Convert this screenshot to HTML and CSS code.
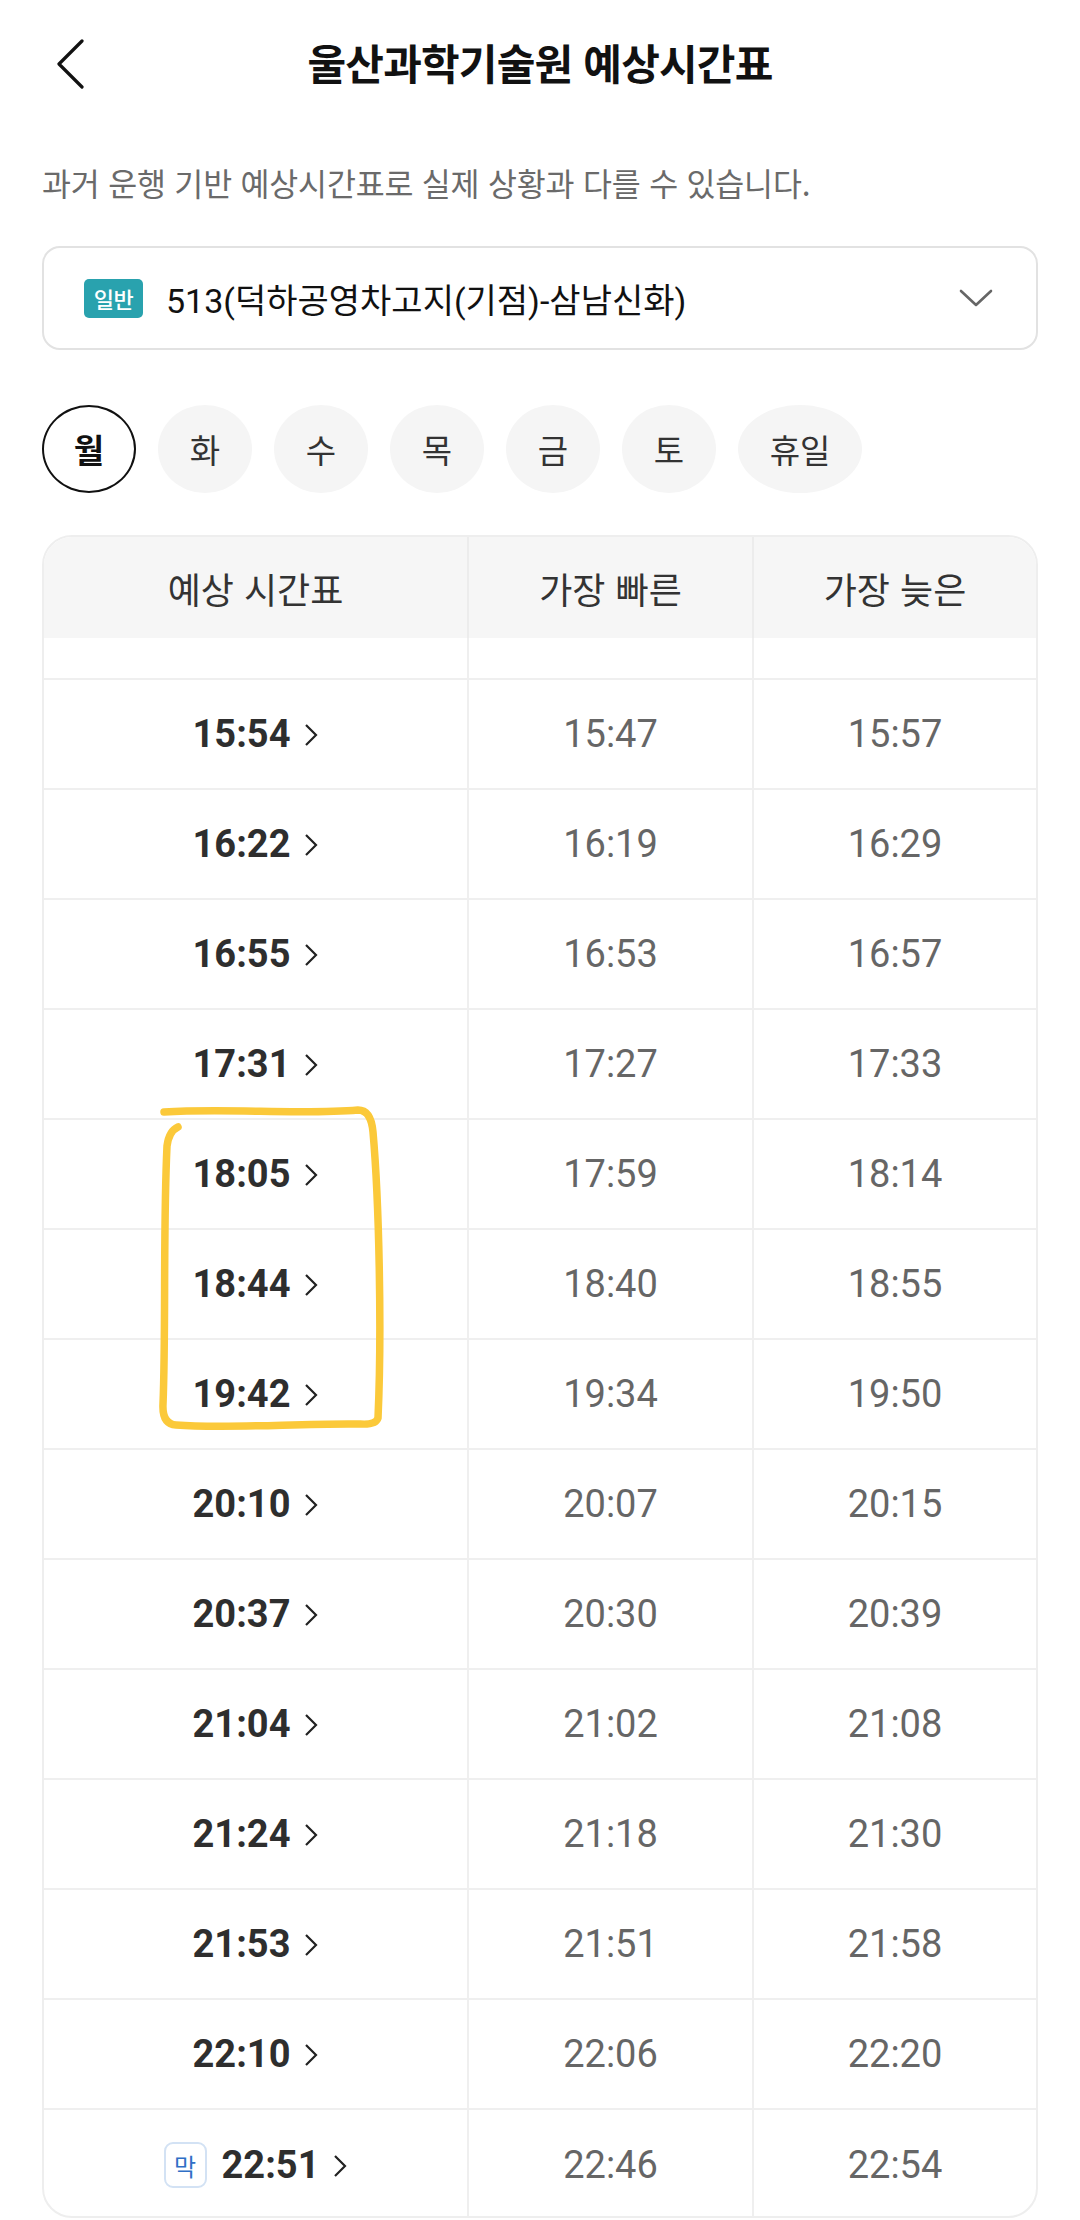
FILE: index.html
```html
<!DOCTYPE html>
<html lang="ko">
<head>
<meta charset="utf-8">
<title>울산과학기술원 예상시간표</title>
<link rel="stylesheet" href="styles.css">
</head>
<body>
<div class="page">
  <header class="topbar">
    <div class="back">
      <svg width="28" height="50" viewBox="0 0 28 50"><path d="M25 2 L2 25 L25 48" fill="none" stroke="#111" stroke-width="3.2" stroke-linecap="round" stroke-linejoin="round"/></svg>
    </div>
    <h1 class="title">울산과학기술원 예상시간표</h1>
    <div></div>
  </header>

  <main class="content">
    <p class="notice">과거 운행 기반 예상시간표로 실제 상황과 다를 수 있습니다.</p>

    <div class="route-select">
      <span class="badge-type">일반</span>
      <span class="route-name">513(덕하공영차고지(기점)-삼남신화)</span>
      <svg class="dd" width="34" height="18" viewBox="0 0 34 18"><path d="M2 2 L17 16 L32 2" fill="none" stroke="#666" stroke-width="2.6" stroke-linecap="round" stroke-linejoin="round"/></svg>
    </div>

    <div class="days">
      <span class="day active">월</span>
      <span class="day">화</span>
      <span class="day">수</span>
      <span class="day">목</span>
      <span class="day">금</span>
      <span class="day">토</span>
      <span class="day wide">휴일</span>
    </div>

    <section class="table">
      <div class="thead">
        <div class="th">예상 시간표</div>
        <div class="th">가장 빠른</div>
        <div class="th">가장 늦은</div>
      </div>
      <div class="tbody">
        <div class="rows">
          <div class="row"><div class="td main"><span>15:21</span><svg class="chev" width="14" height="24" viewBox="0 0 14 24"><path d="M2 2 L12 12 L2 22" fill="none" stroke="#222" stroke-width="2.2"/></svg></div><div class="td">15:16</div><div class="td">15:25</div></div>
          <div class="row"><div class="td main"><span>15:54</span><svg class="chev" width="14" height="24" viewBox="0 0 14 24"><path d="M2 2 L12 12 L2 22" fill="none" stroke="#222" stroke-width="2.2"/></svg></div><div class="td">15:47</div><div class="td">15:57</div></div>
          <div class="row"><div class="td main"><span>16:22</span><svg class="chev" width="14" height="24" viewBox="0 0 14 24"><path d="M2 2 L12 12 L2 22" fill="none" stroke="#222" stroke-width="2.2"/></svg></div><div class="td">16:19</div><div class="td">16:29</div></div>
          <div class="row"><div class="td main"><span>16:55</span><svg class="chev" width="14" height="24" viewBox="0 0 14 24"><path d="M2 2 L12 12 L2 22" fill="none" stroke="#222" stroke-width="2.2"/></svg></div><div class="td">16:53</div><div class="td">16:57</div></div>
          <div class="row"><div class="td main"><span>17:31</span><svg class="chev" width="14" height="24" viewBox="0 0 14 24"><path d="M2 2 L12 12 L2 22" fill="none" stroke="#222" stroke-width="2.2"/></svg></div><div class="td">17:27</div><div class="td">17:33</div></div>
          <div class="row"><div class="td main"><span>18:05</span><svg class="chev" width="14" height="24" viewBox="0 0 14 24"><path d="M2 2 L12 12 L2 22" fill="none" stroke="#222" stroke-width="2.2"/></svg></div><div class="td">17:59</div><div class="td">18:14</div></div>
          <div class="row"><div class="td main"><span>18:44</span><svg class="chev" width="14" height="24" viewBox="0 0 14 24"><path d="M2 2 L12 12 L2 22" fill="none" stroke="#222" stroke-width="2.2"/></svg></div><div class="td">18:40</div><div class="td">18:55</div></div>
          <div class="row"><div class="td main"><span>19:42</span><svg class="chev" width="14" height="24" viewBox="0 0 14 24"><path d="M2 2 L12 12 L2 22" fill="none" stroke="#222" stroke-width="2.2"/></svg></div><div class="td">19:34</div><div class="td">19:50</div></div>
          <div class="row"><div class="td main"><span>20:10</span><svg class="chev" width="14" height="24" viewBox="0 0 14 24"><path d="M2 2 L12 12 L2 22" fill="none" stroke="#222" stroke-width="2.2"/></svg></div><div class="td">20:07</div><div class="td">20:15</div></div>
          <div class="row"><div class="td main"><span>20:37</span><svg class="chev" width="14" height="24" viewBox="0 0 14 24"><path d="M2 2 L12 12 L2 22" fill="none" stroke="#222" stroke-width="2.2"/></svg></div><div class="td">20:30</div><div class="td">20:39</div></div>
          <div class="row"><div class="td main"><span>21:04</span><svg class="chev" width="14" height="24" viewBox="0 0 14 24"><path d="M2 2 L12 12 L2 22" fill="none" stroke="#222" stroke-width="2.2"/></svg></div><div class="td">21:02</div><div class="td">21:08</div></div>
          <div class="row"><div class="td main"><span>21:24</span><svg class="chev" width="14" height="24" viewBox="0 0 14 24"><path d="M2 2 L12 12 L2 22" fill="none" stroke="#222" stroke-width="2.2"/></svg></div><div class="td">21:18</div><div class="td">21:30</div></div>
          <div class="row"><div class="td main"><span>21:53</span><svg class="chev" width="14" height="24" viewBox="0 0 14 24"><path d="M2 2 L12 12 L2 22" fill="none" stroke="#222" stroke-width="2.2"/></svg></div><div class="td">21:51</div><div class="td">21:58</div></div>
          <div class="row"><div class="td main"><span>22:10</span><svg class="chev" width="14" height="24" viewBox="0 0 14 24"><path d="M2 2 L12 12 L2 22" fill="none" stroke="#222" stroke-width="2.2"/></svg></div><div class="td">22:06</div><div class="td">22:20</div></div>
          <div class="row last"><div class="td main"><span class="badge-last">막</span><span>22:51</span><svg class="chev" width="14" height="24" viewBox="0 0 14 24"><path d="M2 2 L12 12 L2 22" fill="none" stroke="#222" stroke-width="2.2"/></svg></div><div class="td">22:46</div><div class="td">22:54</div></div>
        </div>
      </div>
    </section>
  </main>

  <svg class="scribble" width="1080" height="2220" viewBox="0 0 1080 2220">
    <path d="M164 1112 C230 1108 300 1115 358 1110 Q371 1110 373 1132 C379 1200 382 1330 378 1418 Q376 1425 360 1424 C300 1423 230 1429 176 1425 Q162 1424 163 1404 C166 1330 163 1230 167 1146 Q169 1131 178 1127" fill="none" stroke="#fbc93a" stroke-width="7.5" stroke-linecap="round" stroke-linejoin="round"/>
  </svg>
</div>
</body>
</html>
```

FILE: styles.css
```css
* { box-sizing: border-box; }

html, body {
  margin: 0;
  padding: 0;
  background: #fff;
}

body {
  font-family: "Noto Sans CJK KR", "Noto Sans", sans-serif;
  color: #222;
  width: 1080px;
  height: 2220px;
  overflow: hidden;
}

.page {
  position: relative;
  width: 1080px;
  height: 2220px;
}

.topbar {
  height: 124px;
  display: grid;
  grid-template-columns: 1fr auto 1fr;
  align-items: center;
}

.back {
  padding-left: 57px;
  padding-top: 4px;
  display: flex;
  align-items: center;
}

.title {
  margin: 0;
  font-size: 42px;
  font-weight: 700;
  letter-spacing: -0.8px;
  color: #111;
  line-height: 1;
}

.content {
  padding: 0 42px;
}

.notice {
  margin: 38px 0 0;
  font-size: 31.5px;
  line-height: 40px;
  color: #6a6a6a;
  letter-spacing: -0.2px;
}

.route-select {
  margin-top: 44px;
  height: 104px;
  border: 2px solid #e2e2e2;
  border-radius: 18px;
  display: flex;
  align-items: center;
  padding: 0 43px 0 40px;
}

.badge-type {
  width: 59px;
  height: 39px;
  border-radius: 5px;
  background: #29a2ae;
  color: #fff;
  font-size: 22px;
  font-weight: 500;
  display: flex;
  align-items: center;
  justify-content: center;
  letter-spacing: -0.5px;
}

.route-name {
  margin-left: 23px;
  font-family: "Roboto", "Noto Sans CJK KR", sans-serif;
  font-size: 34px;
  color: #111;
  flex: 1;
}

.dd {
  display: block;
}

.days {
  margin-top: 55px;
  display: flex;
  gap: 22px;
}

.day {
  width: 94px;
  height: 88px;
  border-radius: 50%;
  background: #f5f5f5;
  display: flex;
  align-items: center;
  justify-content: center;
  font-size: 33px;
  color: #333;
}

.day.wide {
  width: 124px;
}

.day.active {
  background: #fff;
  border: 2.5px solid #111;
  font-weight: 700;
  color: #111;
}

.table {
  margin-top: 42px;
  border: 2px solid #eeeeee;
  border-radius: 30px;
  overflow: hidden;
}

.thead {
  height: 101px;
  background: #f6f6f6;
  display: grid;
  grid-template-columns: 425px 285px 1fr;
}

.th {
  display: flex;
  align-items: center;
  justify-content: center;
  font-size: 36px;
  color: #333;
  border-right: 2px solid #ececec;
}

.th:last-child {
  border-right: none;
}

.tbody {
  height: 1578px;
  overflow: hidden;
}

.rows {
  margin-top: -68px;
}

.row {
  height: 110px;
  display: grid;
  grid-template-columns: 425px 285px 1fr;
  border-bottom: 2px solid #efefef;
}

.row.last {
  border-bottom: none;
}

.td {
  display: flex;
  align-items: center;
  justify-content: center;
  font-family: "Roboto", sans-serif;
  font-size: 38px;
  color: #666;
  border-right: 2px solid #efefef;
}

.td:last-child {
  border-right: none;
}

.td.main {
  font-weight: 700;
  color: #2e2e2e;
  gap: 14px;
}

.chev {
  display: block;
  margin-top: 2px;
}

.badge-last {
  width: 43px;
  height: 46px;
  border: 2px solid #d3e2f4;
  border-radius: 9px;
  color: #2f6fc6;
  font-family: "Noto Sans CJK KR", sans-serif;
  font-size: 24px;
  font-weight: 400;
  display: flex;
  align-items: center;
  justify-content: center;
  margin-right: 1px;
}

.scribble {
  position: absolute;
  top: 0;
  left: 0;
  pointer-events: none;
}
```
